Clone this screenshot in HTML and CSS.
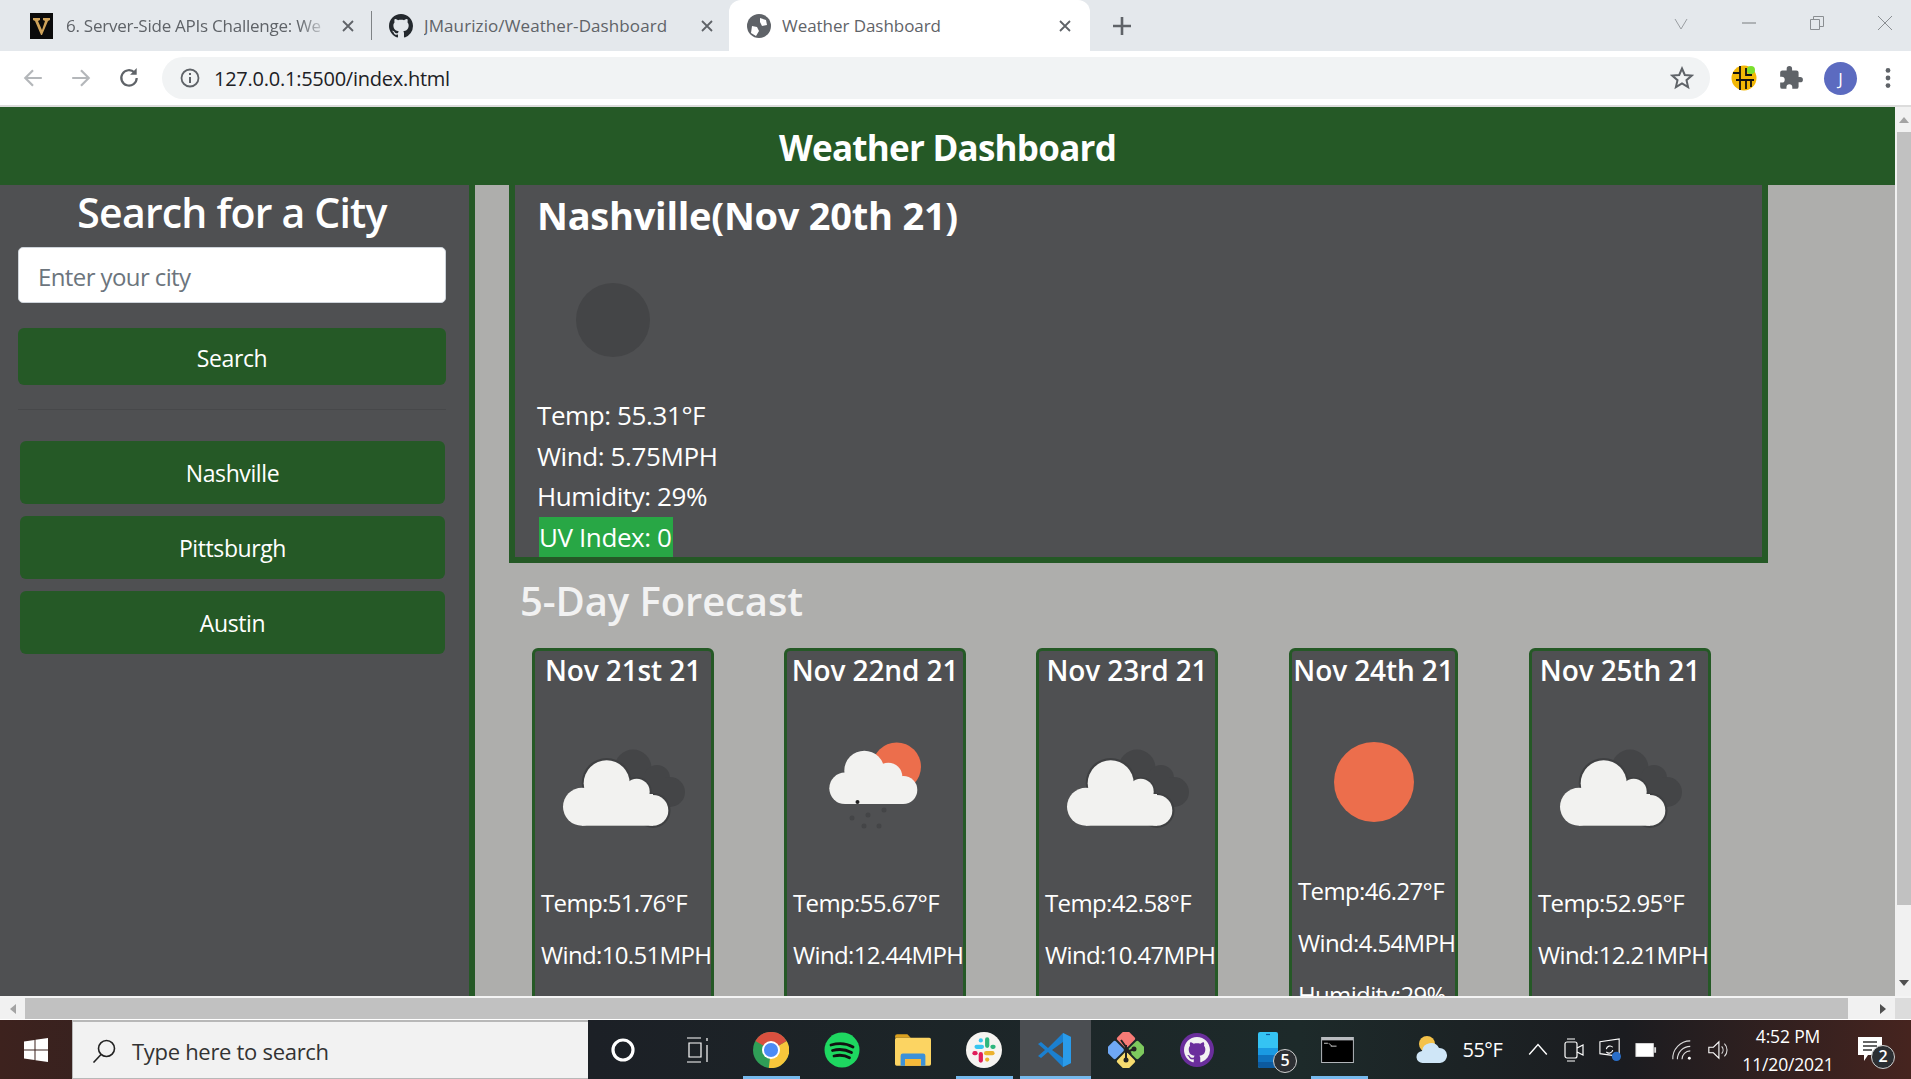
FILE: index.html
```html
<!DOCTYPE html>
<html lang="en">
<head>
  <meta charset="UTF-8" />
  <title>Weather Dashboard</title>
  <link rel="stylesheet" href="styles.css">
</head>
<body>
  <svg class="defs" xmlns="http://www.w3.org/2000/svg">
    <symbol id="octocat" viewBox="0 0 16 16">
      <path d="M8 0C3.58 0 0 3.58 0 8c0 3.54 2.29 6.53 5.47 7.59.4.07.55-.17.55-.38 0-.19-.01-.82-.01-1.49-2.01.37-2.53-.49-2.69-.94-.09-.23-.48-.94-.82-1.13-.28-.15-.68-.52-.01-.53.63-.01 1.08.58 1.23.82.72 1.21 1.87.87 2.33.66.07-.52.28-.87.51-1.07-1.78-.2-3.64-.89-3.64-3.95 0-.87.31-1.59.82-2.15-.08-.2-.36-1.02.08-2.12 0 0 .67-.21 2.2.82.64-.18 1.32-.27 2-.27.68 0 1.36.09 2 .27 1.53-1.04 2.2-.82 2.2-.82.44 1.1.16 1.92.08 2.12.51.56.82 1.27.82 2.15 0 3.07-1.87 3.75-3.65 3.95.29.25.54.73.54 1.48 0 1.07-.01 1.93-.01 2.2 0 .21.15.46.55.38A8.013 8.013 0 0016 8c0-4.42-3.58-8-8-8z"/>
    </symbol>
    <symbol id="x-mark" viewBox="0 0 12 12">
      <path d="M1 1l10 10M11 1L1 11" fill="none" stroke="currentColor" stroke-width="1.8"/>
    </symbol>
    <symbol id="clouds" viewBox="0 0 176 199">
      <g fill="#444547">
        <circle cx="98" cy="79" r="18.5"/>
        <circle cx="122" cy="89" r="13"/>
        <circle cx="135" cy="103" r="15"/>
        <rect x="90" y="85" width="40" height="32"/>
      </g>
      <g fill="#3f4042">
        <circle cx="71.7" cy="94" r="25"/>
        <circle cx="101.7" cy="103" r="15"/>
        <circle cx="118" cy="121.4" r="17.5"/>
      </g>
      <g fill="#f2f2f0">
        <circle cx="47" cy="117.7" r="19"/>
        <circle cx="71.7" cy="94.3" r="23"/>
        <circle cx="101.7" cy="102.7" r="13"/>
        <circle cx="118" cy="121.4" r="15.3"/>
        <rect x="47" y="105" width="71" height="31.7"/>
      </g>
    </symbol>
  </svg>

  <div class="window">
    <div class="tabs">
      <div class="tab tab-one">
        <svg class="favicon" viewBox="0 0 23 26"><rect width="23" height="26" fill="#0b0b0b"/><path d="M3 5h7v2L8 8l4 9 3-9-2-1V5h7v2l-2 1-6 14h-1L5 8 3 7z" fill="#cfa35a"/></svg>
        <span class="tab-title tab-title-fade">6. Server-Side APIs Challenge: We</span>
        <svg class="tab-close"><use href="#x-mark"/></svg>
      </div>
      <div class="tab-sep"></div>
      <div class="tab tab-two">
        <svg class="favicon-round"><use href="#octocat"/></svg>
        <span class="tab-title">JMaurizio/Weather-Dashboard</span>
        <svg class="tab-close"><use href="#x-mark"/></svg>
      </div>
      <div class="tab tab-active">
        <svg class="favicon-round" viewBox="0 0 24 24"><circle cx="12" cy="12" r="12" fill="#5f6368"/><path d="M4 19l1-7 5 1 2 4-3 5zM13 4l6 2 1 5-5 1-2-4z" fill="#fff"/></svg>
        <span class="tab-title">Weather Dashboard</span>
        <svg class="tab-close"><use href="#x-mark"/></svg>
      </div>
      <svg class="new-tab" viewBox="0 0 20 20"><path d="M10 1v18M1 10h18" stroke="#5f6368" stroke-width="2.6"/></svg>
      <div class="win-controls">
        <svg viewBox="0 0 14 14"><path d="M1 3l6 10 6-10" fill="none" stroke="#9a9ea2" stroke-width="1"/></svg>
        <svg viewBox="0 0 14 14"><path d="M0 7h14" stroke="#8a8e92" stroke-width="1.2"/></svg>
        <svg viewBox="0 0 14 14"><path d="M.5 3.500h9v10h-9zM3.500 3.500V.5h10v10h-4" fill="none" stroke="#8a8e92"/></svg>
        <svg viewBox="0 0 14 14"><path d="M0 0l14 14M14 0L0 14" stroke="#8a8e92" stroke-width="1"/></svg>
      </div>
    </div>

    <div class="toolbar">
      <span class="nav-btn"><svg viewBox="0 0 20 20"><path d="M18 10H3M10 3l-7 7 7 7" fill="none" stroke="#b4b7ba" stroke-width="2"/></svg></span>
      <span class="nav-btn"><svg viewBox="0 0 20 20"><path d="M2 10h15M10 3l7 7-7 7" fill="none" stroke="#b4b7ba" stroke-width="2"/></svg></span>
      <span class="nav-btn"><svg viewBox="0 0 20 20"><path d="M17 10a7 7 0 1 1-2-5" fill="none" stroke="#5f6368" stroke-width="2"/><path d="M17 1v6h-6z" fill="#5f6368"/></svg></span>
      <div class="omnibox">
        <svg class="info-icon" viewBox="0 0 20 20"><circle cx="10" cy="10" r="8.500" fill="none" stroke="#5f6368" stroke-width="1.800"/><path d="M10 9v6M10 5v2" stroke="#5f6368" stroke-width="2"/></svg>
        <span class="url">127.0.0.1:5500/index.html</span>
        <svg class="star" viewBox="0 0 24 24"><path d="M12 2.500l2.800 6.500 7 .6-5.300 4.600 1.600 6.900-6.100-3.700-6.100 3.700 1.600-6.900L2.200 9.600l7-.6z" fill="none" stroke="#5f6368" stroke-width="2"/></svg>
      </div>
      <span class="ext-slot ext-first"><svg viewBox="0 0 26 26"><circle cx="13" cy="13" r="12.500" fill="#f2b705"/><path d="M9 1v24M15 3v7h6M15 24v-9H5M2 8h7M20 15v7M15 15h8" stroke="#111" stroke-width="1.800" fill="none"/><circle cx="20" cy="5" r="4" fill="#7be02d"/></svg></span>
      <span class="ext-slot"><svg viewBox="0 0 24 24"><path d="M20.500 11H19V7a2 2 0 0 0-2-2h-4V3.500a2.500 2.500 0 0 0-5 0V5H4a2 2 0 0 0-2 2v3.800h1.500a2.700 2.700 0 0 1 0 5.400H2V20a2 2 0 0 0 2 2h3.800v-1.500a2.700 2.700 0 0 1 5.400 0V22H17a2 2 0 0 0 2-2v-4h1.500a2.500 2.500 0 0 0 0-5z" fill="#5f6368"/></svg></span>
      <span class="ext-slot ext-avatar"><span class="avatar">J</span></span>
      <span class="ext-slot"><svg viewBox="0 0 24 24"><circle cx="12" cy="5" r="2.200" fill="#5f6368"/><circle cx="12" cy="12" r="2.200" fill="#5f6368"/><circle cx="12" cy="19" r="2.200" fill="#5f6368"/></svg></span>
    </div>

    <div class="viewport">
      <div class="page">
        <header class="page-header"><h1>Weather Dashboard</h1></header>
        <div class="page-body">
          <aside class="sidebar">
            <h2>Search for a City</h2>
            <input class="city-input" type="text" placeholder="Enter your city">
            <button class="btn btn-search">Search</button>
            <hr class="divider">
            <div class="history">
              <button class="btn btn-city">Nashville</button>
              <button class="btn btn-city">Pittsburgh</button>
              <button class="btn btn-city">Austin</button>
            </div>
          </aside>

          <main class="content">
            <section class="current">
              <h2>Nashville(Nov 20th 21)</h2>
              <svg class="current-icon" viewBox="0 0 148 157"><circle cx="76" cy="82" r="37" fill="#444547"/></svg>
              <p>Temp: 55.31°F</p>
              <p>Wind: 5.75MPH</p>
              <p>Humidity: 29%</p>
              <p><span class="uv">UV Index: 0</span></p>
            </section>

            <h2 class="forecast-title">5-Day Forecast</h2>
            <div class="forecast">
              <article class="day">
                <h3>Nov 21st 21</h3>
                <svg class="day-icon"><use href="#clouds"/></svg>
                <p>Temp:51.76°F</p>
                <p>Wind:10.51MPH</p>
              </article>
              <article class="day">
                <h3>Nov 22nd 21</h3>
                <svg class="day-icon" viewBox="0 0 176 199">
                  <circle cx="109.700" cy="77.700" r="24.300" fill="#ec6e4c"/>
                  <g fill="#f2f2f0">
                    <circle cx="58" cy="99.300" r="15.700"/>
                    <circle cx="77.300" cy="81.700" r="20"/>
                    <circle cx="101.300" cy="87.700" r="14"/>
                    <circle cx="116.300" cy="101" r="14"/>
                    <rect x="58" y="90" width="58" height="25"/>
                  </g>
                  <g fill="#444547">
                    <circle cx="70.500" cy="113" r="2" fill="#222"/>
                    <circle cx="65" cy="129" r="2.500"/>
                    <circle cx="81" cy="126" r="2.500"/>
                    <circle cx="97" cy="121" r="2.500"/>
                    <circle cx="77" cy="137" r="2.500"/>
                    <circle cx="92" cy="137" r="2.500"/>
                  </g>
                </svg>
                <p>Temp:55.67°F</p>
                <p>Wind:12.44MPH</p>
              </article>
              <article class="day">
                <h3>Nov 23rd 21</h3>
                <svg class="day-icon"><use href="#clouds"/></svg>
                <p>Temp:42.58°F</p>
                <p>Wind:10.47MPH</p>
              </article>
              <article class="day day-narrow">
                <h3>Nov 24th 21</h3>
                <svg class="day-icon day-icon-short" viewBox="0 0 163 187"><circle cx="82" cy="93" r="40" fill="#ec6e4c"/></svg>
                <p>Temp:46.27°F</p>
                <p>Wind:4.54MPH</p>
                <p>Humidity:29%</p>
              </article>
              <article class="day">
                <h3>Nov 25th 21</h3>
                <svg class="day-icon"><use href="#clouds"/></svg>
                <p>Temp:52.95°F</p>
                <p>Wind:12.21MPH</p>
              </article>
            </div>
          </main>
        </div>
      </div>
      <div class="vbar">
        <span class="vbar-arrow"><svg viewBox="0 0 10 6"><path d="M5 0l5 6H0z" fill="#a3a3a3"/></svg></span>
        <div class="vbar-thumb"></div>
        <span class="vbar-arrow vbar-arrow-down"><svg viewBox="0 0 10 6"><path d="M5 6l5-6H0z" fill="#505050"/></svg></span>
      </div>
    </div>

    <div class="hbar">
      <span class="hbar-arrow"><svg viewBox="0 0 6 10"><path d="M0 5l6 5V0z" fill="#a3a3a3"/></svg></span>
      <div class="hbar-thumb"></div>
      <span class="hbar-arrow hbar-arrow-right"><svg viewBox="0 0 6 10"><path d="M6 5L0 0v10z" fill="#505050"/></svg></span>
      <div class="hbar-corner"></div>
    </div>

    <div class="taskbar">
      <span class="start"><svg viewBox="0 0 24 24"><path d="M0 3.500l10.500-1.500v9.500H0zM11.500 1.800L24 0v11.500H11.500zM0 12.500h10.500V22L0 20.500zM11.500 12.500H24V24l-12.500-1.800z" fill="#fff"/></svg></span>
      <div class="search-box">
        <svg viewBox="0 0 24 24"><circle cx="14.500" cy="9.500" r="8" fill="none" stroke="#222" stroke-width="1.600"/><path d="M9 15.500L1.500 23.500" stroke="#222" stroke-width="1.600"/></svg>
        <span>Type here to search</span>
      </div>
      <span class="task-tool cortana"><svg viewBox="0 0 24 24"><circle cx="12" cy="12" r="10" fill="none" stroke="#fff" stroke-width="3.200"/></svg></span>
      <span class="task-tool taskview"><svg viewBox="0 0 24 26"><path d="M0 1h14M0 25h14M2 6h12v14H2zM20 1v3M20 8v17" fill="none" stroke="#fff" stroke-width="1.200"/></svg></span>
      <span class="task-app open">
        <svg viewBox="0 0 32 32"><circle cx="16" cy="16" r="16" fill="#2f9e57"/><path d="M16 16L29.900 8A16 16 0 0 1 14 31.900z" fill="#f7c63b"/><path d="M16 16L2.100 8a16 16 0 0 1 27.800 0z" fill="#d9503f"/><circle cx="16" cy="16" r="8" fill="#fff"/><circle cx="16" cy="16" r="6.300" fill="#4c8bf5"/></svg>
      </span>
      <span class="task-app">
        <svg viewBox="0 0 36 36"><circle cx="18" cy="18" r="17.500" fill="#1ed760"/><path d="M7 13c7-2 15-2 22 2M8.500 18.500c6-1.600 13-1.200 19 2M10 24c5-1.200 11-.8 15.500 1.800" fill="none" stroke="#111" stroke-width="2.800" stroke-linecap="round"/></svg>
      </span>
      <span class="task-app">
        <svg viewBox="0 0 32 28"><path d="M0 2a2 2 0 0 1 2-2h9l3 3h-14z" fill="#dba11f"/><rect y="3" width="32" height="25" rx="1.500" fill="#fcd462"/><path d="M5 28v-9a2 2 0 0 1 2-2h18a2 2 0 0 1 2 2v9h-4v-6H9v6z" fill="#3c91d8"/><rect x="9" y="22" width="14" height="6" fill="#f5b93a"/></svg>
      </span>
      <span class="task-app open">
        <svg viewBox="0 0 34 34"><circle cx="17" cy="17" r="17" fill="#f6f4f1"/><g fill="none" stroke-width="4" stroke-linecap="round"><path d="M10 14h5" stroke="#36c5f0"/><path d="M20 7v6" stroke="#2eb67d"/><path d="M25 14h1" stroke="#2eb67d"/><path d="M14 21v6" stroke="#e01e5a"/><path d="M8 20h1" stroke="#e01e5a"/><path d="M19 20h6" stroke="#ecb22e"/><path d="M20 26h0" stroke="#ecb22e"/><path d="M14 8h0" stroke="#36c5f0"/></g></svg>
      </span>
      <span class="task-app open active">
        <svg viewBox="0 0 36 36"><path d="M26 1L11 16 4 10l-3 2 7 6-7 6 3 2 7-6 15 15 8-4V5z" fill="#1b80d0"/><path d="M26 10L15 18l11 8z" fill="#4b4e52"/><path d="M26 1l8 4v26l-8 4z" fill="#2a9bea"/></svg>
      </span>
      <span class="task-app">
        <svg viewBox="0 0 36 36"><g transform="rotate(45 18 18)"><rect x="3" y="3" width="14" height="14" rx="2" fill="#f77b76"/><rect x="19" y="3" width="14" height="14" rx="2" fill="#7dc95e"/><rect x="3" y="19" width="14" height="14" rx="2" fill="#6fa8f5"/><rect x="19" y="19" width="14" height="14" rx="2" fill="#f7dc6f"/></g><path d="M13 8l10 14M18 13v14M26 17l-7 3" stroke="#222" stroke-width="2" fill="none"/><circle cx="18" cy="28" r="2.500" fill="#222"/><circle cx="26" cy="17" r="2.500" fill="#222"/></svg>
      </span>
      <span class="task-app">
        <span class="gh-desktop"><svg><use href="#octocat"/></svg></span>
      </span>
      <span class="task-app task-phone">
        <svg viewBox="0 0 20 36"><rect width="20" height="36" rx="2" fill="#35c3f3"/><path d="M0 16h20v7H0z" fill="#1a9ae2"/><path d="M0 23h20v7H0z" fill="#0f72bd"/><path d="M0 30h20v4a2 2 0 0 1-2 2H2a2 2 0 0 1-2-2z" fill="#0d5a9e"/><path d="M8 2.500h4" stroke="#0d5a9e" stroke-width="1.200"/></svg>
        <span class="count-badge">5</span>
      </span>
      <span class="task-app task-term open">
        <svg viewBox="0 0 34 27"><rect width="34" height="27" fill="#b9bcc0"/><rect x="1" y="3.500" width="32" height="22.500" fill="#000"/><path d="M3 6.500h4M8 6.500l3 3M10 9.500h6" stroke="#ccc" stroke-width="1"/></svg>
      </span>
      <div class="tray">
        <span class="tray-weather"><svg viewBox="0 0 32 30"><circle cx="12" cy="9" r="8" fill="#f4c24a"/><path d="M8 28a6 6 0 0 1-1-12 9 9 0 0 1 17-3 7.500 7.500 0 0 1 1 15z" fill="#cfe6f7"/></svg></span>
        <span class="tray-temp">55°F</span>
        <span class="tray-slot tray-first"><svg viewBox="0 0 20 20"><path d="M2 14l8-9 8 9" fill="none" stroke="#fff" stroke-width="1.300"/></svg></span>
        <span class="tray-slot"><svg viewBox="0 0 20 24"><rect x="1" y="4" width="12" height="16" rx="2" fill="none" stroke="#fff" stroke-width="1.200"/><path d="M13 10l6-3v10l-6-3M3 1h8M3 23h8" fill="none" stroke="#fff" stroke-width="1.200"/></svg></span>
        <span class="tray-slot"><svg viewBox="0 0 24 26"><path d="M1 4l21-3v19L1 17z" fill="none" stroke="#fff" stroke-width="1.200"/><path d="M8 12a4 4 0 0 1 7-2M15 13a4 4 0 0 1-7 2" fill="none" stroke="#fff" stroke-width="1.200"/><circle cx="19" cy="20" r="5" fill="#2a6fc9"/></svg></span>
        <span class="tray-slot"><svg viewBox="0 0 24 16"><rect x="1" y="1" width="19" height="14" fill="#fff" stroke="#ddd"/><rect x="21" y="5" width="2" height="6" fill="#ddd"/></svg></span>
        <span class="tray-slot"><svg viewBox="0 0 24 24"><path d="M2 22A19 19 0 0 1 21 2M7 22A14 14 0 0 1 21 8M12 22a9 9 0 0 1 9-9" fill="none" stroke="#ddd" stroke-width="1.200"/><circle cx="20" cy="21" r="1.600" fill="#fff"/></svg></span>
        <span class="tray-slot"><svg viewBox="0 0 24 24"><path d="M2 9h5l6-6v18l-6-6H2z" fill="none" stroke="#fff" stroke-width="1.200"/><path d="M16 8a6 6 0 0 1 0 8M19 5a10 10 0 0 1 0 14" fill="none" stroke="#ddd" stroke-width="1.200"/></svg></span>
        <div class="clock">
          <span>4:52 PM</span>
          <span>11/20/2021</span>
        </div>
        <span class="notify">
          <svg viewBox="0 0 24 26"><path d="M0 0h24v18H10l-4 6v-6H0z" fill="#fff"/><path d="M5 5h14M5 9h14M5 13h9" stroke="#333" stroke-width="1.300"/></svg>
          <span class="count-badge">2</span>
        </span>
      </div>
    </div>
  </div>
</body>
</html>
```

FILE: styles.css
```css
* {
  box-sizing: border-box;
}
body {
  margin: 0;
  font-family: 'Open Sans', 'Noto Sans', sans-serif;
  background-color: #aeaeac;
}
h1, h2, h3, p {
  margin: 0;
}
svg {
  display: block;
}
.defs {
  width: 0;
  height: 0;
}
.window {
  display: flex;
  flex-direction: column;
  height: 100vh;
  overflow: hidden;
}

/* browser tabs */
.tabs {
  display: flex;
  align-items: center;
  flex: none;
  height: 51px;
  background: #e4e8ec;
  color: #5f6368;
}
.tab {
  display: flex;
  align-items: center;
  flex: none;
  height: 51px;
}
.tab-one {
  width: 371px;
  padding-left: 30px;
}
.tab-two {
  width: 357px;
  padding-left: 17px;
}
.tab-active {
  width: 361px;
  padding-left: 18px;
  background: #fff;
  border-radius: 12px 12px 0 0;
}
.favicon {
  width: 23px;
  height: 26px;
  margin-right: 13px;
}
.favicon-round {
  width: 24px;
  height: 24px;
  margin-right: 11px;
  fill: #24292e;
}
.tab-title {
  width: 271px;
  font-size: 17px;
  letter-spacing: 0.1px;
  white-space: nowrap;
  overflow: hidden;
}
.tab-active .tab-title {
  letter-spacing: -0.05px;
}
.tab-title-fade {
  width: 264px;
  letter-spacing: -0.25px;
  -webkit-mask-image: linear-gradient(to right, #000 88%, transparent);
  mask-image: linear-gradient(to right, #000 88%, transparent);
}
.tab-close {
  width: 12px;
  height: 12px;
  margin-left: 6px;
  color: #5f6368;
}
.tab-one .tab-close {
  margin-left: 12px;
}
.tab-sep {
  flex: none;
  width: 1px;
  height: 29px;
  background: #7f8386;
}
.new-tab {
  width: 20px;
  height: 20px;
  margin-left: 22px;
}
.win-controls {
  display: flex;
  gap: 54px;
  margin-left: auto;
  padding-right: 19px;
  margin-top: -6px;
}
.win-controls svg {
  width: 14px;
  height: 14px;
}

/* browser toolbar */
.toolbar {
  display: flex;
  align-items: center;
  flex: none;
  height: 56px;
  padding-left: 9px;
  background: #fff;
  border-bottom: 2px solid #dcdcdc;
}
.nav-btn {
  display: flex;
  justify-content: center;
  width: 48px;
}
.nav-btn svg {
  width: 22px;
  height: 22px;
}
.omnibox {
  display: flex;
  align-items: center;
  width: 1548px;
  height: 42px;
  margin-left: 9px;
  padding: 0 16px 0 18px;
  background: #f1f3f4;
  border-radius: 21px;
}
.info-icon {
  width: 20px;
  height: 20px;
  margin-right: 14px;
}
.url {
  font-size: 20px;
  letter-spacing: -0.25px;
  color: #202124;
}
.star {
  width: 24px;
  height: 24px;
  margin-left: auto;
}
.ext-slot {
  display: flex;
  justify-content: center;
  width: 47px;
}
.ext-slot svg {
  width: 26px;
  height: 26px;
}
.ext-first {
  margin-left: 10px;
}
.ext-avatar {
  margin-left: 3px;
}
.avatar {
  width: 33px;
  height: 33px;
  border-radius: 50%;
  background: #5c6bc0;
  color: #fff;
  font-size: 17px;
  line-height: 33px;
  text-align: center;
}

/* the page itself */
.viewport {
  display: flex;
  flex: 1;
  min-height: 0;
}
.page {
  display: flex;
  flex-direction: column;
  flex: 1;
  min-width: 0;
  overflow: hidden;
  background-color: #aeaeac;
  color: #fff;
}
.page-header {
  flex: none;
  height: 78px;
  background: #255926;
  text-align: center;
}
.page-header h1 {
  font-size: 35px;
  font-weight: 700;
  letter-spacing: -0.75px;
  line-height: 82px;
}
.page-body {
  display: flex;
  flex: 1;
  min-height: 0;
}
.sidebar {
  flex: none;
  width: 475px;
  padding: 0 23px 0 18px;
  background: #4f5052;
  border-right: 6px solid #255926;
}
.sidebar h2 {
  font-size: 41px;
  font-weight: 600;
  letter-spacing: -0.8px;
  line-height: 54px;
  text-align: center;
}
.city-input {
  display: block;
  width: 100%;
  height: 56px;
  margin-top: 8px;
  padding: 2px 19px 0;
  background: #fff;
  border: 1px solid #ced4da;
  border-radius: 5px;
  font: 24px 'Open Sans', sans-serif;
  letter-spacing: -0.6px;
}
.city-input::placeholder {
  color: #6c757d;
}
.btn {
  display: block;
  width: 100%;
  background: #255926;
  border: 0;
  border-radius: 6px;
  color: #fff;
  font: 23px 'Open Sans', sans-serif;
  letter-spacing: -0.4px;
}
.btn-search {
  height: 57px;
  margin-top: 25px;
  padding-top: 4px;
}
.divider {
  height: 1px;
  margin: 24px 0 0;
  background: #47484a;
  border: 0;
}
.history {
  display: flex;
  flex-direction: column;
  gap: 12px;
  margin: 31px 1px 0 2px;
}
.btn-city {
  height: 63px;
}
.content {
  flex: 1;
  min-width: 0;
  padding-left: 34px;
}
.current {
  width: 1259px;
  padding: 7px 22px 0;
  background: #4f5052;
  border: 6px solid #255926;
  border-top: 0;
  font-size: 26px;
  letter-spacing: -0.4px;
  line-height: 40.5px;
}
.current h2 {
  font-size: 38px;
  font-weight: 700;
  letter-spacing: -0.25px;
  line-height: 46px;
}
.current-icon {
  width: 148px;
  height: 157px;
}
.uv {
  display: inline-block;
  margin-left: 2px;
  padding: 0 1px 0 0;
  background: #28a745;
}
.forecast-title {
  margin: 14px 0 0 11px;
  color: #f2f2f2;
  font-size: 40px;
  font-weight: 600;
  letter-spacing: -0.1px;
  line-height: 48px;
}
.forecast {
  display: flex;
  gap: 70px;
  margin: 23px 0 0 23px;
}
.day {
  flex: none;
  width: 182px;
  padding-bottom: 20px;
  background: #4f5052;
  border: 3px solid #255926;
  border-radius: 6px;
  font-size: 24px;
  letter-spacing: -0.65px;
}
.day-narrow {
  width: 169px;
  margin: 0 1px;
}
.day h3 {
  font-size: 28px;
  font-weight: 600;
  letter-spacing: -0.1px;
  line-height: 38px;
  text-align: center;
  white-space: nowrap;
}
.day-icon {
  width: 176px;
  height: 199px;
}
.day-icon-short {
  width: 163px;
  height: 187px;
}
.day p {
  padding-left: 6px;
  line-height: 30px;
  margin-bottom: 22px;
  white-space: nowrap;
}

/* fake scrollbars */
.vbar {
  display: flex;
  flex-direction: column;
  flex: none;
  width: 16px;
  padding-left: 2px;
  background: #f1f1f1;
}
.vbar-arrow {
  display: flex;
  align-items: center;
  justify-content: center;
  flex: none;
  height: 25px;
}
.vbar-arrow svg {
  width: 10px;
  height: 6px;
}
.vbar-thumb {
  flex: none;
  height: 773px;
  background: #c1c1c1;
}
.vbar-arrow-down {
  margin-top: auto;
  height: 26px;
}
.hbar {
  display: flex;
  flex: none;
  height: 24px;
  background: #f1f1f1;
  border-top: 2px solid #f4f4f4;
  border-bottom: 1px solid #fff;
}
.hbar-arrow {
  display: flex;
  align-items: center;
  justify-content: center;
  flex: none;
  width: 25px;
}
.hbar-arrow svg {
  width: 6px;
  height: 10px;
}
.hbar-thumb {
  flex: none;
  width: 1823px;
  background: #c1c1c1;
}
.hbar-arrow-right {
  width: 47px;
  padding-left: 23px;
}
.hbar-corner {
  flex: none;
  width: 16px;
  background: #dcdcdc;
}

/* windows taskbar */
.taskbar {
  display: flex;
  align-items: center;
  flex: none;
  height: 59px;
  background: linear-gradient(to right, #3d221e, #1c2026 31%, #1d2a2a 68%, #1b1c20 85%, #46241f);
  color: #fff;
}
.start {
  display: flex;
  justify-content: center;
  flex: none;
  width: 72px;
}
.start svg {
  width: 24px;
  height: 24px;
}
.search-box {
  display: flex;
  align-items: center;
  flex: none;
  gap: 16px;
  width: 516px;
  height: 59px;
  padding: 2px 0 0 19px;
  background: #f2f2f2;
  border: 1px solid #b8b8b8;
  border-width: 2px 0 1px 1px;
  color: #333;
  font-size: 22px;
  letter-spacing: -0.3px;
}
.search-box svg {
  width: 24px;
  height: 24px;
}
.task-tool {
  display: flex;
  justify-content: center;
  flex: none;
}
.cortana {
  width: 70px;
}
.cortana svg {
  width: 24px;
  height: 24px;
}
.taskview {
  width: 77.500px;
  padding-left: 4px;
}
.taskview svg {
  width: 24px;
  height: 26px;
}
.task-app {
  position: relative;
  display: flex;
  align-items: center;
  justify-content: center;
  flex: none;
  width: 71px;
  height: 59px;
}
.task-app > svg {
  width: 36px;
  height: 36px;
}
.task-app.open::after {
  content: "";
  position: absolute;
  left: 7px;
  right: 7px;
  bottom: 0;
  height: 3px;
  background: #76b9ed;
}
.task-app.active {
  background: #4b4e52;
}
.task-app.active::after {
  left: 0;
  right: 0;
}
.gh-desktop {
  display: flex;
  align-items: center;
  justify-content: center;
  width: 34px;
  height: 34px;
  background: #6a2e9c;
  border-radius: 50%;
}
.gh-desktop svg {
  width: 26px;
  height: 26px;
  fill: #f2f2f2;
}
.task-phone > svg {
  width: 20px;
}
.task-term > svg {
  width: 33px;
  height: 26px;
  margin-right: 4px;
}
.count-badge {
  position: absolute;
  width: 24px;
  height: 24px;
  background: #2c2f33;
  border: 1.500px solid #cfcfcf;
  border-radius: 50%;
  font-size: 16px;
  font-weight: 600;
  line-height: 21px;
  text-align: center;
}
.task-phone .count-badge {
  left: 40.500px;
  bottom: 6px;
}
.tray {
  display: flex;
  align-items: center;
  flex: none;
  margin-left: 40px;
}
.tray-weather {
  flex: none;
  width: 36px;
}
.tray-weather svg {
  width: 32px;
  height: 30px;
}
.tray-temp {
  flex: none;
  width: 42px;
  margin-left: 12px;
  font-size: 20px;
  letter-spacing: -0.5px;
}
.tray-slot {
  display: flex;
  justify-content: center;
  flex: none;
  width: 36px;
}
.tray-first {
  margin-left: 15.500px;
}
.tray-slot svg {
  width: 22px;
  height: 24px;
}
.clock {
  display: flex;
  flex-direction: column;
  align-items: center;
  flex: none;
  gap: 5px;
  width: 104px;
  padding-top: 2px;
  font-size: 17.500px;
  letter-spacing: -0.15px;
  line-height: 23px;
}
.notify {
  position: relative;
  display: flex;
  justify-content: center;
  flex: none;
  width: 60px;
}
.notify svg {
  width: 24px;
  height: 26px;
}
.notify .count-badge {
  left: 31px;
  top: 8px;
}
```
